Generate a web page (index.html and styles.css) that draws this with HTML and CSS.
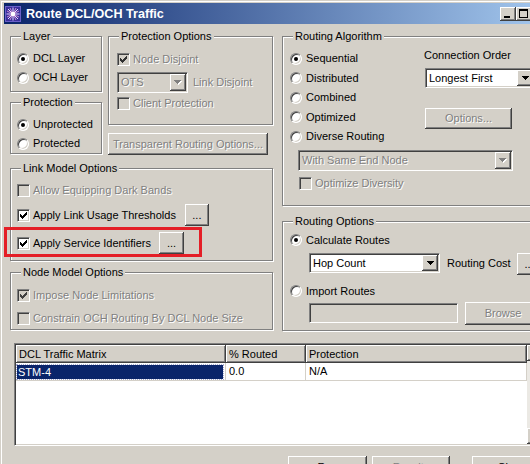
FILE: index.html
```html
<!DOCTYPE html>
<html>
<head>
<meta charset="utf-8">
<title>Route DCL/OCH Traffic</title>
<link rel="stylesheet" href="styles.css">
</head>
<body>
<div class="window">
  <div class="titlebar">
    <svg class="appicon" width="16" height="16" viewBox="0 0 16 16">
      <rect width="16" height="16" fill="#3a2f9c"/>
      <rect x="0.5" y="0.5" width="15" height="15" fill="none" stroke="#6a60c8"/>
      <g stroke="#e6d8ff" stroke-width="1">
        <path d="M8 1.5v13M1.5 8h13M3 3l10 10M13 3L3 13"/>
      </g>
      <g stroke="#f0a8e0" stroke-width="1" opacity="0.8">
        <path d="M5 2l6 12M11 2L5 14M2 5l12 6M2 11l12-6"/>
      </g>
      <circle cx="8" cy="8" r="2.2" fill="#fff"/>
    </svg>
    <span class="title">Route DCL/OCH Traffic</span>
    <span class="tbtns">
      <span class="tbtn"><svg width="16" height="14" viewBox="0 0 16 14"><rect x="4" y="9" width="6" height="2" fill="#000"/></svg></span>
      <span class="tbtn"><svg width="16" height="14" viewBox="0 0 16 14"><rect x="3" y="2" width="9" height="2" fill="#000"/><rect x="3.5" y="2.5" width="8" height="8" fill="none" stroke="#000"/></svg></span>
      <span class="tbtn close"><svg width="16" height="14" viewBox="0 0 16 14"><path d="M4.5 3.5l7 6M11.5 3.5l-7 6" stroke="#000" stroke-width="1.6"/></svg></span>
    </span>
  </div>

  <div class="content">
    <div class="top">
      <div class="leftcol">
        <div class="row-a">
          <div class="col-a1">
            <div class="group g-layer">
              <div class="legend">Layer</div>
              <div class="gbody pad-radio">
                <div class="opt"><span class="radio on"></span><span>DCL Layer</span></div>
                <div class="opt"><span class="radio"></span><span>OCH Layer</span></div>
              </div>
            </div>
            <div class="group g-prot">
              <div class="legend">Protection</div>
              <div class="gbody pad-radio">
                <div class="opt"><span class="radio on"></span><span>Unprotected</span></div>
                <div class="opt"><span class="radio"></span><span>Protected</span></div>
              </div>
            </div>
          </div>
          <div class="col-a2">
            <div class="group g-protopts">
              <div class="legend">Protection Options</div>
              <div class="gbody pad-po">
                <div class="opt"><span class="check dis"><svg class="ck" width="7" height="7" viewBox="0 0 7 7"><g fill="#303030"><rect x="6" y="0" width="1" height="3"/><rect x="5" y="1" width="1" height="3"/><rect x="4" y="2" width="1" height="3"/><rect x="3" y="3" width="1" height="3"/><rect x="2" y="4" width="1" height="3"/><rect x="1" y="3" width="1" height="3"/><rect x="0" y="2" width="1" height="3"/></g></svg></span><span class="distext">Node Disjoint</span></div>
                <div class="combo-row">
                  <div class="combo dis w-ots">
                    <span class="val distext">OTS</span>
                    <span class="dbtn"><svg width="8" height="5" viewBox="0 0 8 5"><g fill="#fff"><rect x="1" y="1" width="7" height="1"/><rect x="2" y="2" width="5" height="1"/><rect x="3" y="3" width="3" height="1"/><rect x="4" y="4" width="1" height="1"/></g><g fill="#808080"><rect x="0" y="0" width="7" height="1"/><rect x="1" y="1" width="5" height="1"/><rect x="2" y="2" width="3" height="1"/><rect x="3" y="3" width="1" height="1"/></g></svg></span>
                  </div>
                  <span class="distext link-disjoint">Link Disjoint</span>
                </div>
                <div class="opt opt-client"><span class="check dis"></span><span class="distext">Client Protection</span></div>
              </div>
            </div>
            <div class="btn dis-btn b-transparent"><span class="distext">Transparent Routing Options...</span></div>
          </div>
        </div>

        <div class="group g-link">
          <div class="legend">Link Model Options</div>
          <div class="gbody pad-link">
            <div class="opt h20"><span class="check dis"></span><span class="distext">Allow Equipping Dark Bands</span></div>
            <div class="opt h22 mt4"><span class="check"><svg class="ck" width="7" height="7" viewBox="0 0 7 7"><g fill="#000"><rect x="6" y="0" width="1" height="3"/><rect x="5" y="1" width="1" height="3"/><rect x="4" y="2" width="1" height="3"/><rect x="3" y="3" width="1" height="3"/><rect x="2" y="4" width="1" height="3"/><rect x="1" y="3" width="1" height="3"/><rect x="0" y="2" width="1" height="3"/></g></svg></span><span>Apply Link Usage Thresholds</span><span class="btn b-dots">...</span></div>
            <div class="opt h22 mt6"><span class="check"><svg class="ck" width="7" height="7" viewBox="0 0 7 7"><g fill="#000"><rect x="6" y="0" width="1" height="3"/><rect x="5" y="1" width="1" height="3"/><rect x="4" y="2" width="1" height="3"/><rect x="3" y="3" width="1" height="3"/><rect x="2" y="4" width="1" height="3"/><rect x="1" y="3" width="1" height="3"/><rect x="0" y="2" width="1" height="3"/></g></svg></span><span>Apply Service Identifiers</span><span class="btn b-dots b-dots2">...</span></div>
          </div>
        </div>

        <div class="group g-node">
          <div class="legend">Node Model Options</div>
          <div class="gbody pad-node">
            <div class="opt h20"><span class="check dis"><svg class="ck" width="7" height="7" viewBox="0 0 7 7"><g fill="#404040"><rect x="6" y="0" width="1" height="3"/><rect x="5" y="1" width="1" height="3"/><rect x="4" y="2" width="1" height="3"/><rect x="3" y="3" width="1" height="3"/><rect x="2" y="4" width="1" height="3"/><rect x="1" y="3" width="1" height="3"/><rect x="0" y="2" width="1" height="3"/></g></svg></span><span class="distext">Impose Node Limitations</span></div>
            <div class="opt h20 mt3"><span class="check dis"></span><span class="distext">Constrain OCH Routing By DCL Node Size</span></div>
          </div>
        </div>
      </div>

      <div class="rightcol">
        <div class="group g-algo">
          <div class="legend">Routing Algorithm</div>
          <div class="gbody pad-algo">
            <div class="algo-top">
              <div class="algo-left">
                <div class="opt ra"><span class="radio on"></span><span>Sequential</span></div>
                <div class="opt ra"><span class="radio"></span><span>Distributed</span></div>
                <div class="opt ra"><span class="radio"></span><span>Combined</span></div>
                <div class="opt ra"><span class="radio"></span><span>Optimized</span></div>
                <div class="opt ra"><span class="radio"></span><span>Diverse Routing</span></div>
              </div>
              <div class="algo-right">
                <div class="conn-label">Connection Order</div>
                <div class="combo w-order">
                  <span class="val">Longest First</span>
                  <span class="dbtn"><svg width="7" height="4" viewBox="0 0 7 4"><g fill="#000"><rect x="0" y="0" width="7" height="1"/><rect x="1" y="1" width="5" height="1"/><rect x="2" y="2" width="3" height="1"/><rect x="3" y="3" width="1" height="1"/></g></svg></span>
                </div>
                <div class="btn b-options"><span class="distext">Options...</span></div>
              </div>
            </div>
            <div class="combo dis w-same">
              <span class="val distext">With Same End Node</span>
              <span class="dbtn"><svg width="8" height="5" viewBox="0 0 8 5"><g fill="#fff"><rect x="1" y="1" width="7" height="1"/><rect x="2" y="2" width="5" height="1"/><rect x="3" y="3" width="3" height="1"/><rect x="4" y="4" width="1" height="1"/></g><g fill="#808080"><rect x="0" y="0" width="7" height="1"/><rect x="1" y="1" width="5" height="1"/><rect x="2" y="2" width="3" height="1"/><rect x="3" y="3" width="1" height="1"/></g></svg></span>
            </div>
            <div class="opt h20 opt-div"><span class="check dis"></span><span class="distext">Optimize Diversity</span></div>
          </div>
        </div>

        <div class="group g-ropts">
          <div class="legend">Routing Options</div>
          <div class="gbody pad-ropts">
            <div class="opt h20"><span class="radio on"></span><span>Calculate Routes</span></div>
            <div class="hop-row">
              <div class="combo w-hop">
                <span class="val">Hop Count</span>
                <span class="dbtn"><svg width="7" height="4" viewBox="0 0 7 4"><g fill="#000"><rect x="0" y="0" width="7" height="1"/><rect x="1" y="1" width="5" height="1"/><rect x="2" y="2" width="3" height="1"/><rect x="3" y="3" width="1" height="1"/></g></svg></span>
              </div>
              <span class="cost-label">Routing Cost</span>
              <span class="btn b-cost">...</span>
            </div>
            <div class="opt h20 mt6"><span class="radio"></span><span>Import Routes</span></div>
            <div class="field-row">
              <span class="field"></span>
              <span class="btn b-browse"><span class="distext">Browse</span></span>
            </div>
          </div>
        </div>
      </div>
    </div>

    <div class="table">
      <div class="lv">
        <div class="hrow">
          <div class="hcell c1">DCL Traffic Matrix</div>
          <div class="hcell c2">% Routed</div>
          <div class="hcell c3">Protection</div>
        </div>
        <div class="trow">
          <div class="tcell c1"><span class="sel">STM-4</span></div>
          <div class="tcell c2">0.0</div>
          <div class="tcell c3">N/A</div>
        </div>
      </div>
      <div class="vscroll">
        <span class="sbtn"></span>
        <span class="strack"></span>
        <span class="sbtn"></span>
      </div>
    </div>

    <div class="btnrow">
      <span class="btn b-run">Run</span>
      <span class="btn b-results"><span class="distext">Results</span></span>
      <span class="btn b-close">Close</span>
    </div>

    <div class="annot"></div>
  </div>
</div>
</body>
</html>
```

FILE: styles.css
```css
* { box-sizing: border-box; }

html, body {
  margin: 0;
  padding: 0;
  width: 530px;
  height: 464px;
  overflow: hidden;
  background: #d4d0c8;
}

body {
  font-family: "Liberation Sans", Arial, sans-serif;
  font-size: 11px;
  line-height: 13px;
  color: #000;
}

.window {
  width: 560px;
  height: 520px;
  border-top: 1px solid #d4d0c8;
  border-left: 1px solid #d4d0c8;
  box-shadow: inset 1px 1px 0 #fff;
  padding: 2px 0 0 3px;
  background: #d4d0c8;
}

/* title bar */
.titlebar {
  width: 549px;
  height: 21px;
  display: flex;
  align-items: center;
  background: linear-gradient(to right, #0a246a, #a6caf0);
  color: #fff;
}
.appicon { flex: none; margin-left: 1px; margin-right: 5px; display: block; }
.title { font-weight: bold; font-size: 12.6px; line-height: 14px; white-space: nowrap; }
.tbtns { margin-left: auto; margin-right: 3px; display: flex; align-self: flex-start; margin-top: 4px; }
.tbtn {
  display: block;
  width: 16px;
  height: 14px;
  background: #d4d0c8;
  box-shadow: inset -1px -1px 0 #404040, inset 1px 1px 0 #fff, inset -2px -2px 0 #808080;
}
.tbtn svg { display: block; }
.tbtn.close { margin-left: 2px; }

/* content */
.content { position: relative; padding: 12px 0 0 6px; }
.top { display: flex; gap: 9px; align-items: flex-start; }
.leftcol { width: 263px; flex: none; }
.rightcol { width: 263px; flex: none; }
.row-a { display: flex; gap: 6px; align-items: flex-start; }
.col-a1 { width: 92px; flex: none; }
.col-a2 { width: 165px; flex: none; }

/* group boxes */
.group {
  border: 1px solid #808080;
  box-shadow: inset 1px 1px 0 #fff, 1px 1px 0 #fff;
}
.legend {
  display: table;
  height: 13px;
  margin: -7px 0 0 10px;
  padding: 0 2px;
  background: #d4d0c8;
  white-space: nowrap;
}
.g-layer { height: 56px; }
.g-prot { height: 52px; margin-top: 10px; }
.g-protopts { height: 89px; }
.g-link { height: 93px; margin-top: 13px; }
.g-node { height: 58px; margin-top: 11px; }
.g-algo { height: 170px; }
.g-ropts { height: 110px; margin-top: 15px; }

.pad-radio { padding: 6px 0 0 6px; }
.pad-link { padding: 5px 0 0 6px; }
.pad-po { padding: 7px 0 0 8px; }
.pad-node { padding: 6px 0 0 6px; }
.pad-algo { padding: 6px 0 0 7px; }
.pad-ropts { padding: 2px 0 0 7px; }

.opt { display: flex; align-items: center; height: 19px; white-space: nowrap; }
.opt.h20 { height: 20px; }
.opt.h22 { height: 22px; }
.opt.ra { height: 19.5px; }
.mt3 { margin-top: 3px; }
.mt4 { margin-top: 4px; }
.mt6 { margin-top: 6px; }
.opt-client { margin-top: 1px; }

.distext { color: #808080; text-shadow: 1px 1px 0 #fff; }

/* radio */
.radio {
  flex: none;
  position: relative;
  width: 12px;
  height: 12px;
  margin-right: 4px;
  border-radius: 50%;
  background: #fff;
  border: 1px solid;
  border-color: #808080 #fff #fff #808080;
  box-shadow: inset 1px 1px 0 #404040, inset -1px -1px 0 #d4d0c8;
}
.radio.on::after {
  content: "";
  position: absolute;
  left: 3px;
  top: 3px;
  width: 4px;
  height: 4px;
  border-radius: 50%;
  background: #000;
}

/* checkbox */
.check {
  flex: none;
  width: 13px;
  height: 13px;
  margin-right: 3px;
  padding: 2px;
  background: #fff;
  border: 1px solid;
  border-color: #808080 #fff #fff #808080;
  box-shadow: inset 1px 1px 0 #404040, inset -1px -1px 0 #d4d0c8;
}
.check.dis { background: #d4d0c8; }
.ck { display: block; }

/* combos */
.combo {
  display: flex;
  height: 20px;
  padding: 1px;
  background: #fff;
  border: 1px solid;
  border-color: #808080 #fff #fff #808080;
  box-shadow: inset 1px 1px 0 #404040, inset -1px -1px 0 #d4d0c8;
}
.combo.dis { background: #d4d0c8; height: 21px; }
.combo .val { flex: 1; display: flex; align-items: center; padding-left: 2px; white-space: nowrap; overflow: hidden; }
.dbtn {
  flex: none;
  width: 16px;
  display: flex;
  align-items: center;
  justify-content: center;
  background: #d4d0c8;
  box-shadow: inset -1px -1px 0 #404040, inset 1px 1px 0 #fff, inset -2px -2px 0 #808080;
}
.dbtn svg { display: block; }
.combo-row { display: flex; align-items: center; margin-top: 3px; height: 21px; }
.w-ots { width: 71px; }
.link-disjoint { margin-left: 5px; white-space: nowrap; }

/* buttons */
.btn {
  display: flex;
  align-items: center;
  justify-content: center;
  flex: none;
  background: #d4d0c8;
  box-shadow: inset -1px -1px 0 #404040, inset 1px 1px 0 #fff, inset -2px -2px 0 #808080;
  white-space: nowrap;
}
.b-transparent { width: 160px; height: 22px; margin-top: 8px; }
.b-dots { width: 24px; height: 22px; margin-left: 9px; }
.b-dots2 { width: 25px; margin-left: 8px; }

/* routing algorithm */
.algo-top { display: flex; }
.algo-left { width: 134px; flex: none; }
.conn-label { white-space: nowrap; }
.w-order { width: 110px; margin-top: 6px; margin-left: 1px; }
.b-options { width: 87px; height: 21px; margin-top: 20px; margin-left: 1px; }
.w-same { width: 215px; margin-top: 3.5px; margin-left: 8px; }
.opt-div { margin-top: 2px; margin-left: 9px; }

/* routing options */
.hop-row { display: flex; align-items: flex-start; height: 22px; margin-top: 3px; }
.w-hop { width: 131px; margin-left: 19px; }
.cost-label { width: 70px; height: 20px; display: flex; align-items: center; margin-left: 7px; white-space: nowrap; }
.b-cost { width: 24px; height: 22px; }
.field-row { display: flex; align-items: flex-start; height: 23px; margin-top: 1px; }
.field {
  display: block;
  width: 149px;
  height: 20px;
  margin-left: 19px;
  margin-top: 1px;
  background: #d4d0c8;
  border: 1px solid;
  border-color: #808080 #fff #fff #808080;
  box-shadow: inset 1px 1px 0 #404040, inset -1px -1px 0 #d4d0c8;
}
.b-browse { width: 76px; height: 23px; margin-left: 7px; }

/* list view */
.table {
  display: flex;
  width: 531px;
  height: 103px;
  margin: 12px 0 0 4px;
  padding: 1px;
  background: #fff;
  border: 1px solid;
  border-color: #808080 #fff #fff #808080;
  box-shadow: inset 1px 1px 0 #404040, inset -1px -1px 0 #d4d0c8;
}
.lv { width: 511px; flex: none; }
.hrow { display: flex; height: 18px; }
.hcell {
  display: flex;
  align-items: center;
  padding-left: 3px;
  background: #d4d0c8;
  box-shadow: inset -1px -1px 0 #404040, inset 1px 1px 0 #fff, inset -2px -2px 0 #808080;
  white-space: nowrap;
}
.c1 { width: 210px; flex: none; }
.c2 { width: 80px; flex: none; }
.c3 { flex: 1; }
.trow { display: flex; height: 18px; }
.tcell {
  display: flex;
  align-items: center;
  padding-left: 3px;
  border-right: 1px solid #d4d0c8;
  border-bottom: 1px solid #d4d0c8;
  white-space: nowrap;
}
.tcell.c1 { padding: 2px 2px 1px 1px; align-items: stretch; }
.sel {
  flex: 1;
  display: flex;
  align-items: center;
  padding-left: 1px;
  background: #0a246a;
  color: #fff;
  outline: 1px dotted #a8acd0;
}
.vscroll { width: 16px; flex: none; display: flex; flex-direction: column; background: #ebe9e4; }
.sbtn {
  display: block;
  height: 16px;
  background: #d4d0c8;
  box-shadow: inset -1px -1px 0 #404040, inset 1px 1px 0 #fff, inset -2px -2px 0 #808080;
}
.strack { flex: 1; }

/* bottom buttons */
.btnrow { display: flex; margin-top: 10px; height: 23px; }
.btnrow .btn { height: 23px; }
.b-run { width: 79px; margin-left: 278px; }
.b-results { width: 78px; margin-left: 5px; }
.b-close { width: 79px; margin-left: 22px; }

/* annotation */
.annot {
  position: absolute;
  left: 0;
  top: 203px;
  width: 198px;
  height: 30px;
  border: 3px solid #e41e26;
}
```
